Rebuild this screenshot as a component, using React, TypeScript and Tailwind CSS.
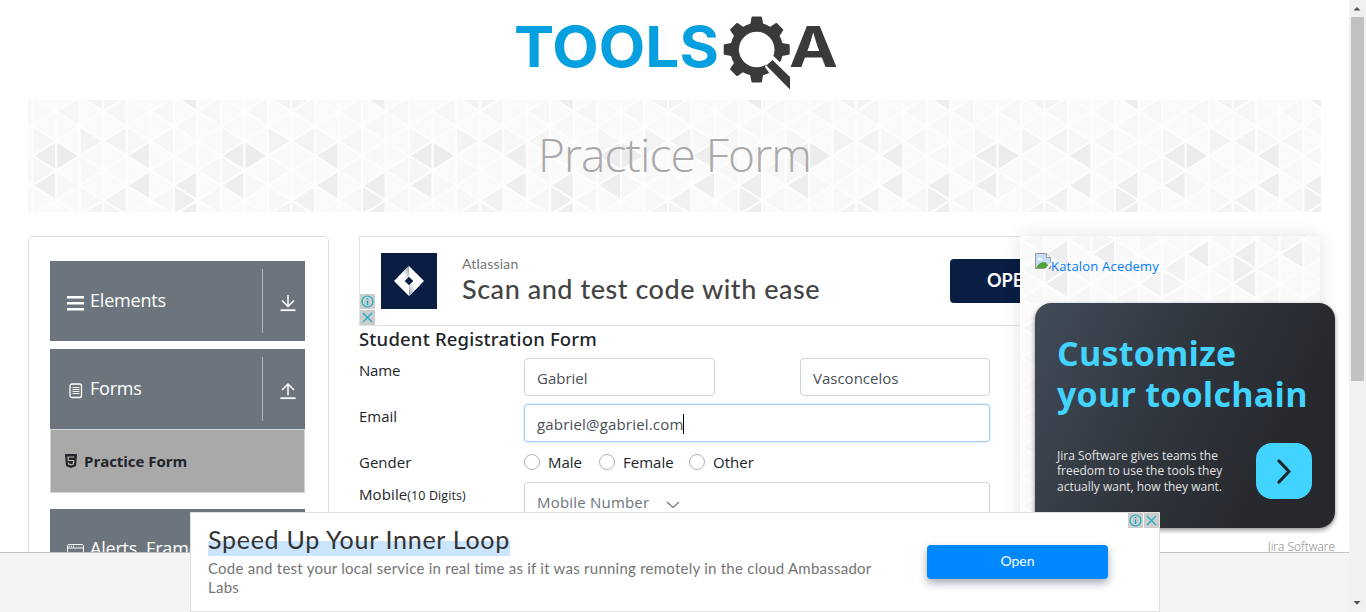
import React from "react";

const UI = "font-['Open_Sans','Noto_Sans',sans-serif]";
const COL = 23.53;
const ROW = 14.8;

const SHADES: Record<string, string> = {
  "0,4": "#ededed", "1,4": "#ececec", "0,6": "#eeeeee", "4,4": "#eeeeee", "4,6": "#eeeeee",
  "6,6": "#eeeeee", "6,7": "#efefef", "3,7": "#f2f2f2", "2,3": "#f3f3f3", "3,3": "#f3f3f3",
  "6,0": "#eeeeee", "2,0": "#f3f3f3", "3,0": "#f4f4f4", "0,5": "#f6f6f6", "0,3": "#f6f6f6",
  "4,3": "#f7f7f7", "5,3": "#f6f6f6", "3,1": "#f7f7f7", "1,1": "#f7f7f7", "7,5": "#f7f7f7",
  "5,7": "#f7f7f7", "7,1": "#f7f7f7", "2,5": "#f8f8f8", "7,7": "#f7f7f7", "6,4": "#f8f8f8",
  "1,6": "#f8f8f8", "5,1": "#f8f8f8", "5,5": "#f8f8f8", "2,7": "#f8f8f8", "6,2": "#f8f8f8",
};

function Triangles({ width, height, x0, y0 }: { width: number; height: number; x0: number; y0: number }) {
  const cells: React.ReactNode[] = [];
  const first = Math.floor(-x0 / COL) - 1;
  const last = Math.ceil((width - x0) / COL);
  const rows = Math.ceil((height - y0) / ROW) + 1;
  for (let c = first; c <= last; c++) {
    for (let j = -1; j <= rows; j++) {
      const left = x0 + c * COL;
      const right = left + COL;
      const y = y0 + j * ROW;
      const tipLeft = Math.abs(c % 2) === Math.abs(j % 2);
      const tip = tipLeft ? left : right;
      const base = tipLeft ? right : left;
      const key = `${((c % 8) + 8) % 8},${((j % 8) + 8) % 8}`;
      cells.push(
        <polygon
          key={`${c}:${j}`}
          points={`${tip},${y} ${base},${y - ROW} ${base},${y + ROW}`}
          fill={SHADES[key] ?? "#fafafa"}
          stroke="#fdfdfd"
          strokeWidth="2"
          strokeLinejoin="round"
        />
      );
    }
  }
  return (
    <svg width={width} height={height} className="block" aria-hidden="true">
      {cells}
    </svg>
  );
}

function Logo() {
  return (
    <svg width="330" height="80" viewBox="510 12 330 80" aria-label="TOOLSQA">
      <text x="514" y="67" fontFamily="Inter, sans-serif" fontWeight="700" fontSize="56" textLength="205" lengthAdjust="spacingAndGlyphs" fill="#069fdf">TOOLS</text>
      <g fill="#3a3a3a">
        {[0, 45, 90, 135, 180, 225, 270, 315].map((a) => (
          <path key={a} d="M751.500 17.200q.3-.7 1-.7h8.400q.7 0 1 .7l1.400 7 4 3v6h-21v-6l4-3z" transform={`rotate(${a} 756.7 49.500)`} />
        ))}
        <circle cx="756.7" cy="49.500" r="26.500" />
      </g>
      <circle cx="756.7" cy="49.500" r="17.800" fill="#fff" />
      <path d="M767 62 L773 55.500 L791.500 73.500 L793 92 L784 88 L770 74 L765 67 Z" fill="#fff" />
      <path d="M766.300 65.500 L772.500 60 L790 77 V89.500 Z" fill="#3a3a3a" />
      <text x="789" y="67" fontFamily="Inter, sans-serif" fontWeight="700" fontSize="56" textLength="49" lengthAdjust="spacingAndGlyphs" fill="#3a3a3a">A</text>
    </svg>
  );
}

function ArrowLine({ up = false }: { up?: boolean }) {
  return (
    <svg width="16" height="18" viewBox="0 0 16 18" fill="none" stroke="#fff" strokeWidth="1.5">
      {up ? <path d="M8 13.500V2M2 8l6-6 6 6" /> : <path d="M8 1v11.500M2 6.500l6 6 6-6" />}
      <path d="M0.500 16.200h15" strokeWidth="1.8" />
    </svg>
  );
}

function Group({ icon, label, up }: { icon: React.ReactNode; label: string; up?: boolean }) {
  return (
    <div className="flex h-20 shrink-0 items-center bg-[#6c757d] text-white">
      <div className="flex w-[212px] items-center pb-0.5 pl-4">
        <span className="flex w-[19px] justify-center pt-[5px]">{icon}</span>
        <span className="ml-[5px] whitespace-nowrap pb-px text-[18px] leading-6 tracking-[-0.2px]">{label}</span>
      </div>
      <div className="flex h-16 flex-1 items-center justify-center border-l border-[#b5b5b5] pl-[7px] pt-1">
        <ArrowLine up={up} />
      </div>
    </div>
  );
}

function Sidebar() {
  return (
    <aside className="flex h-[400px] w-[301px] flex-col rounded-[5px] border border-[#dddddd] pl-[21px] pr-[23px] pt-6">
      <Group
        label="Elements"
        icon={<svg width="17" height="16"><path d="M0 2.200h17M0 8.200h17M0 14.200h17" stroke="#fff" strokeWidth="2.600" /></svg>}
      />
      <div className="h-2 shrink-0" />
      <Group
        up
        label="Forms"
        icon={
          <svg width="14" height="16" fill="none" stroke="#fff">
            <rect x="1" y="1" width="11.500" height="13.500" rx="2" strokeWidth="1.300" />
            <path d="M3.500 4.500h7M3.500 6.500h7M3.500 8.500h7M3.500 10.500h7" strokeWidth="0.900" />
          </svg>
        }
      />
      <div className="flex h-16 shrink-0 items-center border border-[#ced4da] bg-[#a9a9a9] pl-[14px] text-[#212529]">
        <svg width="12" height="14" viewBox="0 0 12 14">
          <path d="M0 0h12l-1 12-5 2-5-2z" fill="#212529" />
          <path d="M9.300 3H3l.3 3.500h5.400L8.400 10 6 10.800 3.600 10 3.400 8.500" fill="none" stroke="#b8b8b8" strokeWidth="1.200" />
        </svg>
        <span className="ml-[7px] text-[15px] font-bold tracking-[-0.040px]">Practice Form</span>
      </div>
      <div className="h-4 shrink-0" />
      <Group
        label="Alerts, Frame"
        icon={
          <svg width="17" height="16" fill="none" stroke="#fff">
            <rect x="0.600" y="1.600" width="15.800" height="13" rx="1" />
            <path d="M1 5h15" />
            <path d="M2 3.300h5" strokeDasharray="1 1" />
          </svg>
        }
      />
    </aside>
  );
}

function AdInfo() {
  return (
    <span className="flex size-[15px] items-center justify-center bg-[#cccccc]">
      <svg width="13" height="13" fill="none" stroke="#14aec8">
        <circle cx="6.500" cy="6.500" r="5.500" strokeWidth="1.200" />
        <path d="M6.500 5.500v4.500M6.500 3v1.300" strokeWidth="1.500" />
      </svg>
    </span>
  );
}

function AdClose() {
  return (
    <span className="flex size-[15px] items-center justify-center bg-[#cccccc]">
      <svg width="11" height="11" stroke="#14aec8" strokeWidth="1.300"><path d="M1 1l9 9M10 1l-9 9" /></svg>
    </span>
  );
}

function TopAd() {
  return (
    <div className="relative flex h-[90px] w-[728px] border border-[#e2e2e2] bg-white">
      <div className="absolute bottom-0 left-0 flex flex-col gap-px"><AdInfo /><AdClose /></div>
      <div className="ml-[21px] mt-4 flex size-14 items-center justify-center bg-[#091e42]">
        <svg width="30" height="30" viewBox="0 0 30 30">
          <defs>
            <linearGradient id="jg1" x1="1" y1="0" x2="0" y2="0.600"><stop stopColor="#8d96a8" /><stop offset="0.600" stopColor="#fff" /></linearGradient>
            <linearGradient id="jg2" x1="0" y1="1" x2="1" y2="0.400"><stop stopColor="#8d96a8" /><stop offset="0.600" stopColor="#fff" /></linearGradient>
          </defs>
          <path d="M15 0L30 15 15 30 0 15z" fill="#fff" />
          <path d="M15 0v11l-4 4L4 11z" fill="url(#jg1)" />
          <path d="M15 30V19l4-4 7 4z" fill="url(#jg2)" />
          <path d="M15 10.700L19.300 15 15 19.300 10.700 15z" fill="#091e42" />
        </svg>
      </div>
      <div className="ml-[25px] pt-[18px] font-['Lato',sans-serif]">
        <div className="text-[14px] leading-[18px] tracking-[0.2px] text-[#757575]">Atlassian</div>
        <div className="whitespace-nowrap text-[27px] font-medium leading-8 tracking-[0.540px] text-[#444444]">Scan and test code with ease</div>
      </div>
      <div className="absolute left-[590px] top-[22px] flex h-11 w-[120px] items-center rounded-[4px] bg-[#091e42] pb-0.5 pl-[37px] font-['Lato',sans-serif] text-[18px] font-bold text-white">OPEN</div>
    </div>
  );
}

const FIELD = "flex h-[38px] items-center rounded-[4px] border bg-white px-3 pt-[3px] text-[15px]";

function Row({ label, children }: { label: React.ReactNode; children: React.ReactNode }) {
  return (
    <div className="mb-2 flex">
      <div className="w-[165px] whitespace-nowrap text-[15px] leading-6">{label}</div>
      {children}
    </div>
  );
}

function Choice({ label, className }: { label: string; className: string }) {
  return (
    <label className={`flex items-center ${className}`}>
      <span className="size-4 rounded-full border border-[#adb5bd] bg-white" />
      <span className="ml-2 text-[15px] leading-6">{label}</span>
    </label>
  );
}

function Main() {
  return (
    <main className="ml-[30px] w-[661px] shrink-0 text-[#212529]">
      <div className="overflow-hidden"><TopAd /></div>
      <h5 className="mb-1.5 h-[26px] whitespace-nowrap font-['Noto_Sans',sans-serif] text-[18.500px] font-medium leading-[26px] tracking-[0.180px]">Student Registration Form</h5>
      <Row label={<span className="tracking-[-0.2px]">Name</span>}>
        <div className={`${FIELD} w-[191px] border-[#ced4da] text-[#495057]`}>Gabriel</div>
        <div className={`${FIELD} ml-[85px] w-[190px] border-[#ced4da] text-[#495057]`}>Vasconcelos</div>
      </Row>
      <Row label="Email">
        <div className={`${FIELD} w-[466px] border-[#a5cbf3] tracking-[0.180px] text-[#495057] shadow-[0_0_0_1px_#e4f1ff]`}>
          gabriel@gabriel.com<span className="-mt-0.5 h-5 w-px bg-black" />
        </div>
      </Row>
      <Row label="Gender">
        <Choice label="Male" className="w-[75px]" />
        <Choice label="Female" className="w-[90px]" />
        <Choice label="Other" className="" />
      </Row>
      <Row label={<span className="tracking-[0.1px]">Mobile<span className="text-[12.500px]">(10 Digits)</span></span>}>
        <div className={`${FIELD} w-[466px] border-[#ced4da] tracking-[0.200px] text-[#6c757d]`}>
          Mobile Number
          <svg width="14" height="8" className="ml-[17px] mt-1" fill="none" stroke="#6c757d" strokeWidth="1.200"><path d="M1 1l6 5.500L13 1" /></svg>
        </div>
      </Row>
    </main>
  );
}

function SidePanel() {
  return (
    <section className="relative h-[400px] w-[300px] shrink-0 shadow-[0_0_16px_rgba(0,0,0,0.12)]">
      <Triangles width={300} height={330} x0={-116.7} y0={-70.500} />
      <div className="absolute left-[15px] top-[17px] flex w-[300px] flex-col">
        <div className="flex h-[50px] items-start text-[#007bff]">
          <svg width="16" height="16" viewBox="0 0 16 16">
            <path d="M0.500 0.500h11l4 4v11h-15z" fill="#c6dbf7" stroke="#9a9a9a" />
            <path d="M11.500 0.500v4h4" fill="#fff" stroke="#9a9a9a" />
            <path d="M3 6.500a1.500 1.500 0 0 1 3-.8 1.200 1.200 0 0 1 1.500 1.600H3z" fill="#fff" />
            <path d="M1 15c2-4 5-6 8-6 2 0 4 3 6 6z" fill="#4da338" />
            <path d="M10 16l6-7v3l-3 4z" fill="#fff" />
          </svg>
          <span className="whitespace-nowrap text-[13px] leading-[26px] tracking-[0.200px]">Katalon Acedemy</span>
        </div>
        <div className="bg-white">
          <div className="flex h-[225px] flex-col rounded-[16px] bg-[linear-gradient(115deg,#414c58_0%,#30353d_45%,#26282c_80%)] pl-[22px] shadow-[0_2px_5px_rgba(0,0,0,0.45)]">
            <div className="mt-[30px] whitespace-nowrap text-[34px] font-bold leading-[41px] tracking-[0.250px] text-[#42d4ff]">
              Customize<br />your toolchain
            </div>
            <div className="mt-7 flex items-center">
              <p className="w-[199px] whitespace-nowrap text-[12px] leading-[15.600px] text-[#e3e3e3]">
                Jira Software gives teams the<br />freedom to use the tools they<br />actually want, how they want.
              </p>
              <span className="flex size-14 items-center justify-center rounded-[16px] bg-[#42d4ff]">
                <svg width="16" height="26" fill="none" stroke="#20242b" strokeWidth="3.200" strokeLinecap="round" strokeLinejoin="round"><path d="M3 3l10 10.500L3 24" /></svg>
              </span>
            </div>
          </div>
          <div className="h-[40px] pt-[11px] text-right text-[12px] font-light leading-4 text-[#808080]">Jira Software</div>
        </div>
      </div>
    </section>
  );
}

function BottomAd() {
  return (
    <div className="absolute left-[190px] top-[512px] flex h-[100px] w-[970px] border border-[#e0e0e0] bg-white font-['Lato',sans-serif]">
      <div className="w-[719px] pl-[17px] pt-[10px]">
        <div className="h-[33px] w-max whitespace-nowrap bg-[linear-gradient(transparent_18px,#cce5ff_18px)] text-[25px] leading-[32px] tracking-[0.720px] text-[#333333]">Speed Up Your Inner Loop</div>
        <p className="whitespace-nowrap pt-[3px] text-[15px] leading-[19px] tracking-[0.245px] text-[#757575]">
          Code and test your local service in real time as if it was running remotely in the cloud Ambassador<br />Labs
        </p>
      </div>
      <div className="ml-[17px] mt-8 flex h-[34px] w-[181px] items-center justify-center rounded-[4px] bg-[#0088ff] pb-[3px] text-[14px] text-white shadow-[0_4px_9px_rgba(60,64,90,0.45)]">Open</div>
      <div className="absolute right-0 top-0 flex gap-px"><AdInfo /><AdClose /></div>
    </div>
  );
}

function Scrollbar() {
  return (
    <div className="flex h-[612px] w-[17px] flex-col items-center bg-[#f1f1f1]">
      <svg width="17" height="17"><path d="M4.500 10.500h7L8 7z" fill="#505050" /></svg>
      <div className="h-[364px] w-[13px] bg-[#c1c1c1]" />
      <div className="flex-1" />
      <svg width="17" height="17"><path d="M4.500 6h7L8 9.800z" fill="#505050" /></svg>
    </div>
  );
}

export default function App() {
  return (
    <div className={`relative flex h-[612px] w-[1366px] overflow-hidden bg-white ${UI}`}>
      <div className="flex h-[612px] w-[1349px] flex-col bg-[#f4f4f4]">
        <div className="h-[553px] overflow-hidden border-b border-[#c4c4c4] bg-white">
          <header className="flex h-[100px] justify-center pt-3"><Logo /></header>
          <div className="relative ml-7 h-28 w-[1293px]">
            <Triangles width={1293} height={112} x0={4.700} y0={-3.300} />
            <h1 className="absolute inset-0 flex items-center justify-center pb-[3px] text-[46px] font-light tracking-[-0.900px] text-[#a9a9a9]">Practice Form</h1>
          </div>
          <div className="ml-7 mt-6 flex">
            <Sidebar />
            <Main />
            <SidePanel />
          </div>
        </div>
      </div>
      <Scrollbar />
      <BottomAd />
    </div>
  );
}
